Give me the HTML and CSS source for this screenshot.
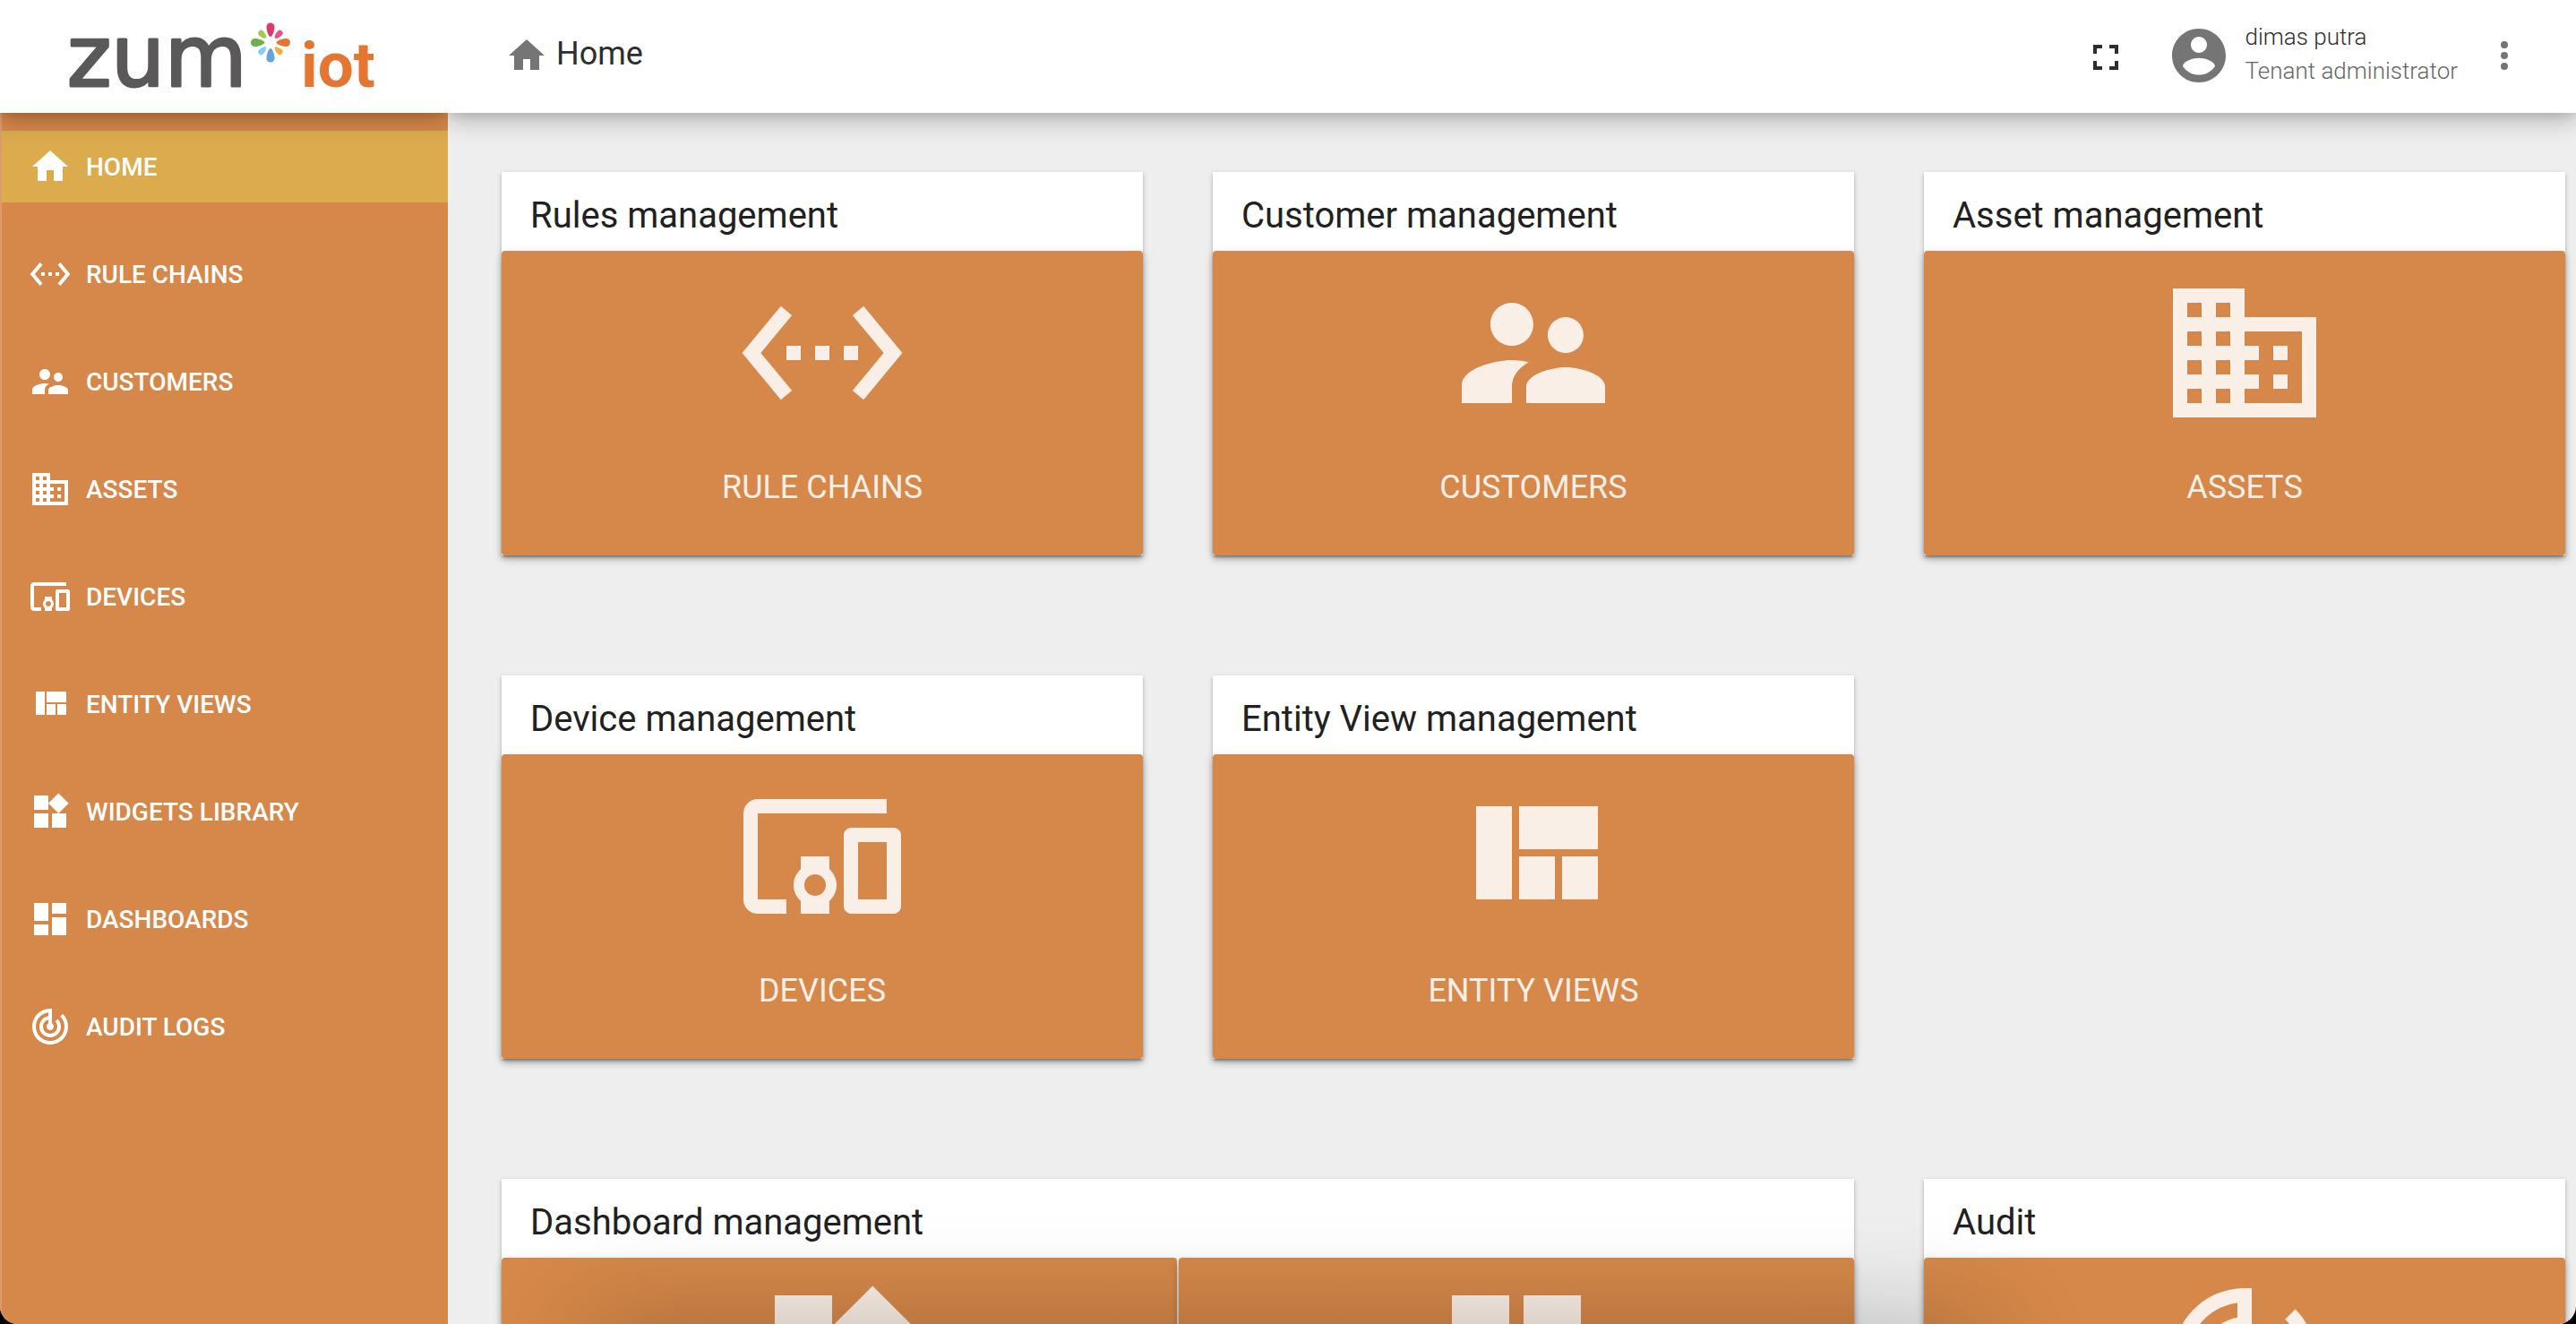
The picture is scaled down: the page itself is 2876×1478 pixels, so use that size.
FILE: index.html
```html
<!DOCTYPE html>
<html lang="en">
<head>
<meta charset="utf-8">
<title>ZUM IoT | Home</title>
<meta name="viewport" content="width=device-width, initial-scale=1">
<link rel="stylesheet" href="styles.css">
</head>
<body>
<svg class="sprite" aria-hidden="true">
  <symbol id="i-home" viewBox="0 0 24 24"><path d="M10 20v-6h4v6h5v-8h3L12 3 2 12h3v8z"/></symbol>
  <symbol id="i-rules" viewBox="0 0 24 24"><path d="M7.77 6.76L6.23 5.48.82 12l5.41 6.52 1.54-1.28L3.42 12l4.35-5.24zM7 13h2v-2H7v2zm10-2h-2v2h2v-2zm-6 2h2v-2h-2v2zm6.77-7.52l-1.54 1.28L20.58 12l-4.35 5.24 1.54 1.28L23.18 12l-5.41-6.52z"/></symbol>
  <symbol id="i-customers" viewBox="0 0 24 24"><path d="M16.5 12c1.38 0 2.49-1.12 2.49-2.5S17.88 7 16.5 7C15.12 7 14 8.12 14 9.5s1.12 2.5 2.5 2.5zM9 11c1.66 0 2.99-1.34 2.99-3S10.66 5 9 5C7.34 5 6 6.34 6 8s1.34 3 3 3zm7.5 3c-1.83 0-5.5.92-5.5 2.75V19h11v-2.25c0-1.83-3.67-2.75-5.5-2.75zM9 13c-2.33 0-7 1.17-7 3.5V19h7v-2.25c0-.85.33-2.34 2.37-3.47C10.5 13.1 9.66 13 9 13z"/></symbol>
  <symbol id="i-assets" viewBox="0 0 24 24"><path d="M12 7V3H2v18h20V7H12zM6 19H4v-2h2v2zm0-4H4v-2h2v2zm0-4H4V9h2v2zm0-4H4V5h2v2zm4 12H8v-2h2v2zm0-4H8v-2h2v2zm0-4H8V9h2v2zm0-4H8V5h2v2zm10 12h-8v-2h2v-2h-2v-2h2v-2h-2V9h8v10zm-2-8h-2v2h2v-2zm0 4h-2v2h2v-2z"/></symbol>
  <symbol id="i-devices" viewBox="0 0 24 24"><path d="M3 6h18V4H3c-1.1 0-2 .9-2 2v12c0 1.1.9 2 2 2h4v-2H3V6zm10 6H9v1.78c-.61.55-1 1.33-1 2.22s.39 1.67 1 2.22V20h4v-1.78c.61-.55 1-1.34 1-2.22s-.39-1.67-1-2.22V12zm-2 5.5c-.83 0-1.5-.67-1.5-1.5s.67-1.5 1.5-1.5 1.5.67 1.5 1.5-.67 1.5-1.5 1.5zM22 8h-6c-.5 0-1 .5-1 1v10c0 .5.5 1 1 1h6c.5 0 1-.5 1-1V9c0-.5-.5-1-1-1zm-1 10h-4v-8h4v8z"/></symbol>
  <symbol id="i-views" viewBox="0 0 24 24"><path d="M10 18h5v-6h-5v6zm-6 0h5V5H4v13zm12 0h5v-6h-5v6zM10 5v6h11V5H10z"/></symbol>
  <symbol id="i-widgets" viewBox="0 0 24 24"><path d="M13 13v8h8v-8h-8zM3 21h8v-8H3v8zM3 3v8h8V3H3zm13.66-1.31L11 7.34 16.66 13l5.66-5.66-5.66-5.65z"/></symbol>
  <symbol id="i-dashboards" viewBox="0 0 24 24"><path d="M3 13h8V3H3v10zm0 8h8v-6H3v6zm10 0h8V11h-8v10zm0-18v6h8V3h-8z"/></symbol>
  <symbol id="i-audit" viewBox="0 0 24 24"><path d="M19.07 4.93l-1.41 1.41C19.1 7.79 20 9.79 20 12c0 4.42-3.58 8-8 8s-8-3.58-8-8c0-4.08 3.05-7.44 7-7.93v2.02C8.16 6.57 6 9.03 6 12c0 3.31 2.69 6 6 6s6-2.69 6-6c0-1.66-.67-3.16-1.76-4.24l-1.41 1.41C15.55 9.9 16 10.9 16 12c0 2.21-1.79 4-4 4s-4-1.79-4-4c0-1.86 1.28-3.41 3-3.86v2.14c-.6.35-1 .98-1 1.72 0 1.1.9 2 2 2s2-.9 2-2c0-.74-.4-1.38-1-1.72V2h-1C6.48 2 2 6.48 2 12s4.48 10 10 10 10-4.48 10-10c0-2.76-1.12-5.26-2.93-7.07z"/></symbol>
  <symbol id="i-fullscreen" viewBox="0 0 24 24"><path d="M7 14H5v5h5v-2H7v-3zm-2-4h2V7h3V5H5v5zm12 7h-3v2h5v-5h-2v3zM14 5v2h3v3h2V5h-5z"/></symbol>
  <symbol id="i-account" viewBox="0 0 24 24"><path d="M12 2C6.48 2 2 6.48 2 12s4.48 10 10 10 10-4.48 10-10S17.52 2 12 2zm0 3c1.66 0 3 1.34 3 3s-1.34 3-3 3-3-1.34-3-3 1.34-3 3-3zm0 14.2c-2.5 0-4.71-1.28-6-3.22.03-1.99 4-3.08 6-3.08 1.99 0 5.97 1.09 6 3.08-1.29 1.94-3.5 3.22-6 3.22z"/></symbol>
  <symbol id="i-more" viewBox="0 0 24 24"><circle cx="12" cy="6" r="2"/><circle cx="12" cy="12" r="2"/><circle cx="12" cy="18" r="2"/></symbol>
</svg>

<div class="app">
  <header class="brand">
    <svg class="logo" viewBox="0 0 500 126" role="img" aria-label="zum iot">
      <text class="logo-zum" x="75" y="96">zum</text>
      <g transform="translate(302 47.5)">
        <path fill="#d93c6b" d="M0-6.5C-2-6.5-4.5-13-4.5-17.5A4.5 4.5 0 0 1 4.5-17.5C4.5-13 2-6.5 0-6.5z"/>
        <path fill="#e57632" transform="rotate(90)" d="M0-6.5C-2-6.5-4.5-13-4.5-17.5A4.5 4.5 0 0 1 4.5-17.5C4.5-13 2-6.5 0-6.5z"/>
        <path fill="#5fa7dd" transform="rotate(180)" d="M0-6.5C-2-6.5-4.5-13-4.5-17.5A4.5 4.5 0 0 1 4.5-17.5C4.5-13 2-6.5 0-6.5z"/>
        <path fill="#70b04a" transform="rotate(270)" d="M0-6.5C-2-6.5-4.5-13-4.5-17.5A4.5 4.5 0 0 1 4.5-17.5C4.5-13 2-6.5 0-6.5z"/>
        <path fill="#e0577f" transform="rotate(45)" d="M0-7C-1.5-7-3.3-11.5-3.3-14.7A3.3 3.3 0 0 1 3.3-14.7C3.3-11.5 1.5-7 0-7z"/>
        <path fill="#efb144" transform="rotate(135)" d="M0-7C-1.5-7-3.3-11.5-3.3-14.7A3.3 3.3 0 0 1 3.3-14.7C3.3-11.5 1.5-7 0-7z"/>
        <path fill="#82d0f2" transform="rotate(225)" d="M0-7C-1.5-7-3.3-11.5-3.3-14.7A3.3 3.3 0 0 1 3.3-14.7C3.3-11.5 1.5-7 0-7z"/>
        <path fill="#a3c850" transform="rotate(315)" d="M0-7C-1.5-7-3.3-11.5-3.3-14.7A3.3 3.3 0 0 1 3.3-14.7C3.3-11.5 1.5-7 0-7z"/>
      </g>
      <text class="logo-iot" x="336" y="97">iot</text>
    </svg>
  </header>

  <header class="toolbar">
    <h1 class="crumb"><svg class="icon"><use href="#i-home"/></svg><span>Home</span></h1>
    <button class="icon-btn fullscreen" type="button" aria-label="Toggle fullscreen"><svg class="icon"><use href="#i-fullscreen"/></svg></button>
    <div class="user">
      <svg class="avatar"><use href="#i-account"/></svg>
      <div class="user-text">
        <span class="user-name">dimas putra</span>
        <span class="user-role">Tenant administrator</span>
      </div>
    </div>
    <button class="icon-btn" type="button" aria-label="User menu"><svg class="icon"><use href="#i-more"/></svg></button>
  </header>

  <nav class="sidebar">
    <ul class="menu">
      <li><a class="menu-link active" href="#home"><svg class="icon"><use href="#i-home"/></svg>HOME</a></li>
      <li><a class="menu-link" href="#rules"><svg class="icon"><use href="#i-rules"/></svg>RULE CHAINS</a></li>
      <li><a class="menu-link" href="#customers"><svg class="icon"><use href="#i-customers"/></svg>CUSTOMERS</a></li>
      <li><a class="menu-link" href="#assets"><svg class="icon"><use href="#i-assets"/></svg>ASSETS</a></li>
      <li><a class="menu-link" href="#devices"><svg class="icon"><use href="#i-devices"/></svg>DEVICES</a></li>
      <li><a class="menu-link" href="#views"><svg class="icon"><use href="#i-views"/></svg>ENTITY VIEWS</a></li>
      <li><a class="menu-link" href="#widgets"><svg class="icon"><use href="#i-widgets"/></svg>WIDGETS LIBRARY</a></li>
      <li><a class="menu-link" href="#dashboards"><svg class="icon"><use href="#i-dashboards"/></svg>DASHBOARDS</a></li>
      <li><a class="menu-link" href="#audit"><svg class="icon"><use href="#i-audit"/></svg>AUDIT LOGS</a></li>
    </ul>
  </nav>

  <main class="content">
    <section class="card">
      <h2 class="card-title">Rules management</h2>
      <div class="tiles"><a class="tile" href="#rules"><svg class="tile-icon"><use href="#i-rules"/></svg><span>RULE CHAINS</span></a></div>
    </section>
    <section class="card">
      <h2 class="card-title">Customer management</h2>
      <div class="tiles"><a class="tile" href="#customers"><svg class="tile-icon"><use href="#i-customers"/></svg><span>CUSTOMERS</span></a></div>
    </section>
    <section class="card">
      <h2 class="card-title">Asset management</h2>
      <div class="tiles"><a class="tile" href="#assets"><svg class="tile-icon"><use href="#i-assets"/></svg><span>ASSETS</span></a></div>
    </section>
    <section class="card">
      <h2 class="card-title">Device management</h2>
      <div class="tiles"><a class="tile" href="#devices"><svg class="tile-icon"><use href="#i-devices"/></svg><span>DEVICES</span></a></div>
    </section>
    <section class="card">
      <h2 class="card-title">Entity View management</h2>
      <div class="tiles"><a class="tile" href="#views"><svg class="tile-icon"><use href="#i-views"/></svg><span>ENTITY VIEWS</span></a></div>
    </section>
    <section class="card wide">
      <h2 class="card-title">Dashboard management</h2>
      <div class="tiles">
        <a class="tile" href="#widgets" aria-label="Widgets library"><svg class="tile-icon"><use href="#i-widgets"/></svg></a>
        <a class="tile" href="#dashboards" aria-label="Dashboards"><svg class="tile-icon"><use href="#i-dashboards"/></svg></a>
      </div>
    </section>
    <section class="card">
      <h2 class="card-title">Audit</h2>
      <div class="tiles"><a class="tile" href="#audit" aria-label="Audit logs"><svg class="tile-icon"><use href="#i-audit"/></svg></a></div>
    </section>
  </main>
</div>
<div class="dock-shadow"></div>
</body>
</html>
```
FILE: styles.css
```css
:root {
  --orange: #d58849;
  --yellow: #dcab4e;
  --cream: #faefe6;
  --surface: #eeeeee;
  --grey: #757575;
}

* { box-sizing: border-box; }

html { background: #000; }

body {
  margin: 0;
  overflow: hidden;
  font-family: Roboto, "Liberation Sans", sans-serif;
  color: #212121;
}

a { color: inherit; text-decoration: none; }

h1, h2 { margin: 0; font-weight: 400; }

.sprite { position: absolute; width: 0; height: 0; }

.icon { flex: none; width: 48px; height: 48px; fill: currentColor; }

.app {
  display: grid;
  grid-template-columns: 500px minmax(0, 1fr);
  grid-template-rows: auto minmax(0, 1fr);
  height: 100vh;
  overflow: hidden;
  border-radius: 0 0 20px 20px;
  background: var(--surface);
}

/* Header: each part casts its shadow downwards only */
.brand,
.toolbar {
  z-index: 1;
  height: 126px;
  background: #fff;
  box-shadow: 0 4px 8px rgba(0, 0, 0, .08), 0 10px 24px rgba(0, 0, 0, .22);
  clip-path: inset(0 0 -60px 0);
}

.logo { display: block; width: 100%; height: 100%; }

.logo-zum {
  font-family: "DejaVu Sans", sans-serif;
  font-size: 94px;
  fill: #5a5858;
  stroke: #5a5858;
  stroke-width: 3px;
  stroke-linejoin: round;
}

.logo-iot { font-size: 71px; font-weight: 700; fill: #e57632; }

.toolbar {
  display: flex;
  align-items: center;
  padding: 0 56px 2px 64px;
}

.crumb {
  display: flex;
  flex: 1;
  align-items: center;
  gap: 9px;
  font-size: 36px;
  line-height: 42px;
  color: #2e2e2e;
}

.crumb .icon { color: var(--grey); }
.crumb span { padding-bottom: 4px; }

.icon-btn {
  display: flex;
  padding: 0;
  border: 0;
  background: none;
  color: var(--grey);
}

.fullscreen { margin-right: 44px; padding-top: 4px; color: #2e2e2e; }

.user {
  display: flex;
  align-items: center;
  gap: 15px;
  margin-right: 28px;
}

.avatar { width: 72px; height: 72px; fill: var(--grey); }

.user-text {
  display: flex;
  flex-direction: column;
  padding-bottom: 4px;
  font-size: 26px;
  font-weight: 300;
  line-height: 38px;
}

.user-name { color: #2e2e2e; }
.user-role { color: #666; }

/* Sidebar */
.sidebar {
  border-left: 2px solid #dc9c69;
  background: var(--orange);
  color: #fff;
}

.menu {
  display: flex;
  flex-direction: column;
  gap: 40px;
  margin: 0;
  padding: 20px 0;
  list-style: none;
}

.menu-link {
  display: flex;
  align-items: center;
  gap: 16px;
  height: 80px;
  padding-left: 30px;
  font-size: 28px;
  font-weight: 500;
}

.active { background: var(--yellow); }

/* Home cards */
.content {
  display: grid;
  grid-template-columns: repeat(3, minmax(0, 1fr));
  align-content: start;
  gap: 134px 78px;
  padding: 66px 12px 66px 60px;
  overflow-y: auto;
  scrollbar-width: none;
}

.card {
  background: #fff;
  box-shadow: 0 2px 6px rgba(0, 0, 0, .2), 0 2px 2px rgba(0, 0, 0, .14), 0 4px 2px -2px rgba(0, 0, 0, .12);
}

.wide { grid-column: 1 / span 2; }

.card-title {
  padding: 25px 32px 15px;
  font-size: 40px;
  line-height: 48px;
}

.tiles { display: flex; gap: 2px; }

.tile {
  display: flex;
  flex: 1;
  flex-direction: column;
  align-items: center;
  gap: 29px;
  min-height: 340px;
  padding-top: 18px;
  border-radius: 4px;
  background: var(--orange);
  box-shadow: 0 4px 10px rgba(0, 0, 0, .26);
  color: var(--cream);
  font-size: 36px;
  line-height: 50px;
}

.tile-icon { width: 192px; height: 192px; fill: currentColor; }

/* Soft shade rising from below the window */
.dock-shadow {
  position: fixed;
  right: 23%;
  bottom: -160px;
  left: 23%;
  height: 160px;
  box-shadow: 0 0 120px rgba(0, 0, 0, .24);
  pointer-events: none;
}
```
